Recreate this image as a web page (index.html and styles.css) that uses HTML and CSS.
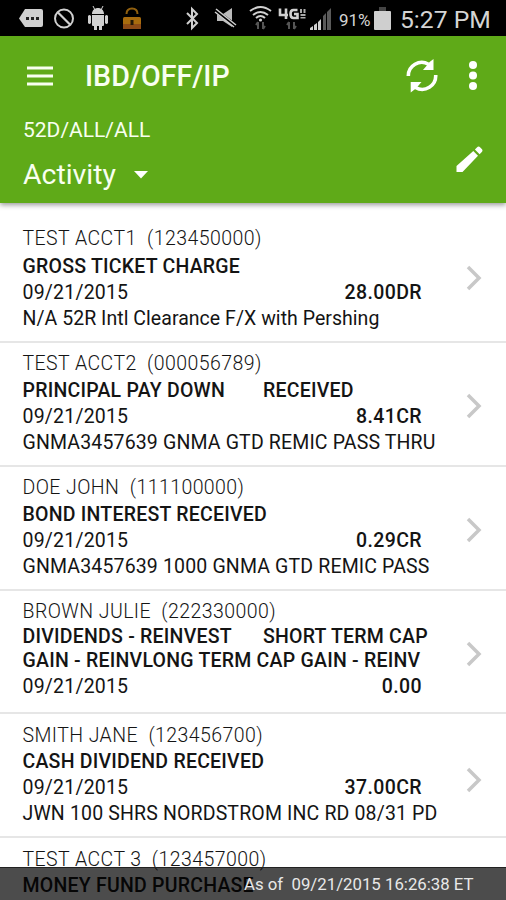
FILE: index.html
```html
<!DOCTYPE html>
<html lang="en">
<head>
<meta charset="utf-8">
<title>Activity</title>
<link rel="stylesheet" href="styles.css">
</head>
<body>
<div class="screen">
  <div class="status">
    <svg class="status-icons" width="130" height="36" viewBox="0 0 130 36" fill="#d0d0d0">
      <path d="M25 9h16q2 0 2 2v14q0 2-2 2H25l-6-8.500z"/>
      <path d="M26 17h3v3h-3zM31 17h3v3h-3zM36 17h3v3h-3z" fill="#222"/>
      <circle cx="64" cy="18.500" r="9" fill="none" stroke="#d0d0d0" stroke-width="2"/>
      <path d="M57.500 12 70.500 25" stroke="#d0d0d0" stroke-width="2.200"/>
      <path d="M92 14c0-8 12-8 12 0zM92 15h12v10q0 1-1 1h-1v4h-3v-4h-2v4h-3v-4h-1q-1 0-1-1zM88 16q1.500-2 3 0v7q-1.500 2-3 0zM105 16q1.500-2 3 0v7q-1.500 2-3 0z"/>
      <path d="M93 6l2 4M103 6l-2 4" stroke="#d0d0d0"/>
    </svg>
    <svg class="lock" width="20" height="24" viewBox="0 0 20 24">
      <path d="M4.500 8q0-5.500 5.500-5.500T15.500 8" fill="none" stroke="#91600f" stroke-width="2"/>
      <rect x="1" y="11" width="18" height="12" rx="1.500" fill="#a86c0e"/><path d="M1 18h18v5H1z" fill="#8d4b16"/>
      <path d="M8.500 14h3v5h-3z" fill="#251a08"/>
    </svg>
    <svg class="signals" width="156" height="36" viewBox="0 0 156 36" fill="#d0d0d0">
      <path d="m4 13 10 10-5 5V9l5 5L4 24" fill="none" stroke="#d0d0d0" stroke-width="2"/>
      <path d="M34 14h6l9-6v19l-9-6h-6z" fill="#bbb"/><path d="m33 11 20 15" stroke="#000" stroke-width="4"/><path d="m33 9 20 16M32 12l19 15" stroke="#d0d0d0" stroke-width="1.500"/>
      <path d="M67 11q10.500-8 21 0M70 15q7.500-6 15 0M73 18q4.500-4 9 0" fill="none" stroke="#d0d0d0" stroke-width="2"/><circle cx="77.500" cy="20" r="1.600"/>
      <path d="M75 22v7m-2-4 2-3M80 22v7m2-3-2 3M106 22v7m-2-4 2-3M111 22v7m2-3-2 3" stroke="#555" stroke-width="2"/>
      <path d="M97 8.500v6.500h8m-2-6.500v10.500M114.500 10h-4q-3 0-3 4t3 4h4v-4h-3.500" fill="none" stroke="#d0d0d0" stroke-width="2.600"/>
      <path d="M117 9h2v4h-2zM120.500 9h2v4h-2zM117.500 14h5v2h-5zM117.500 17h5v1.500h-5z" fill="#aaa"/>
      <path d="M127 30v-2l3-2v4zM131 30v-5l3-2v7zM135 30v-8l3-3v11z"/><path d="M140 30V16l3-3v17zM144 30V12l4-4v22z" fill="#5a5a5a"/>
    </svg>
    <span class="percent">91%</span>
    <svg class="battery" width="17" height="23" viewBox="0 0 17 23"><path d="M5 0h7v4H5z" fill="#444"/><rect y="4" width="17" height="19" rx="1" fill="#cfcfcf"/></svg>
    <span class="clock">5:27 PM</span>
  </div>

  <header class="header">
    <div class="toolbar">
      <svg class="menu" width="27" height="20" viewBox="0 0 27 20"><path d="M1 2h26M1 10h26M1 18h26" stroke="#f7ffef" stroke-width="3"/></svg>
      <h1 class="title">IBD/OFF/IP</h1>
      <svg class="sync" width="32" height="34" viewBox="0 0 32 34">
        <path d="M2.300 17A13.500 13.500 0 0 1 22.500 5.200M29.700 16A13.500 13.500 0 0 1 9.500 28.500" fill="none" stroke="#fff" stroke-width="3.600"/>
        <path d="M27.500 0V11H17l3.600-4.200 3-3.800zM4.700 33.500V23h10.800l-3.600 4.200-3 3z" fill="#fff"/>
      </svg>
      <svg class="more" width="10" height="32" viewBox="0 0 10 32" fill="#fff"><circle cx="5" cy="5" r="4"/><circle cx="5" cy="15.500" r="4"/><circle cx="5" cy="26" r="4"/></svg>
    </div>
    <div class="filter">52D/ALL/ALL</div>
    <div class="view">
      <span class="view-name">Activity</span>
      <svg class="caret" width="14" height="8" viewBox="0 0 14 8"><path d="M0 0h14L7 7.500z" fill="#fff"/></svg>
      <svg class="pencil" width="27" height="27" viewBox="0 0 27 27" fill="#fff"><path d="m17.300 5 4.700 4.700L6.500 26H.5v-6zM18.900 3.500l2-2.100q1.700-1.600 3.400 0l1.500 1.500q1.400 1.500 0 3l-2.200 2.300z"/></svg>
    </div>
  </header>

  <main class="list">
    <article class="row row-first">
      <div class="info"><div class="name">TEST ACCT1  (123450000)</div><div class="kind">GROSS TICKET CHARGE</div><div class="meta"><span>09/21/2015</span><b class="amount">28.00DR</b></div><div class="note mixed">N/A 52R Intl Clearance F/X with Pershing</div></div>
      <svg class="chevron" width="16" height="26" viewBox="0 0 16 26"><path d="m2 2 11 11L2 24"/></svg>
    </article>
    <article class="row">
      <div class="info"><div class="name">TEST ACCT2  (000056789)</div><div class="kind split"><span class="left">PRINCIPAL PAY DOWN</span><span>RECEIVED</span></div><div class="meta"><span>09/21/2015</span><b class="amount">8.41CR</b></div><div class="note">GNMA3457639 GNMA GTD REMIC PASS THRU</div></div>
      <svg class="chevron" width="16" height="26" viewBox="0 0 16 26"><path d="m2 2 11 11L2 24"/></svg>
    </article>
    <article class="row">
      <div class="info"><div class="name">DOE JOHN  (111100000)</div><div class="kind">BOND INTEREST RECEIVED</div><div class="meta"><span>09/21/2015</span><b class="amount">0.29CR</b></div><div class="note">GNMA3457639 1000 GNMA GTD REMIC PASS</div></div>
      <svg class="chevron" width="16" height="26" viewBox="0 0 16 26"><path d="m2 2 11 11L2 24"/></svg>
    </article>
    <article class="row">
      <div class="info"><div class="name">BROWN JULIE  (222330000)</div><div class="kind tight split"><span class="left">DIVIDENDS - REINVEST</span><span>SHORT TERM CAP</span></div><div class="kind tight">GAIN - REINVLONG TERM CAP GAIN - REINV</div><div class="meta"><span>09/21/2015</span><b class="amount">0.00</b></div></div>
      <svg class="chevron" width="16" height="26" viewBox="0 0 16 26"><path d="m2 2 11 11L2 24"/></svg>
    </article>
    <article class="row row-low">
      <div class="info"><div class="name">SMITH JANE  (123456700)</div><div class="kind">CASH DIVIDEND RECEIVED</div><div class="meta"><span>09/21/2015</span><b class="amount">37.00CR</b></div><div class="note">JWN 100 SHRS NORDSTROM INC RD 08/31 PD</div></div>
      <svg class="chevron" width="16" height="26" viewBox="0 0 16 26"><path d="m2 2 11 11L2 24"/></svg>
    </article>
    <article class="row row-low">
      <div class="info"><div class="name">TEST ACCT 3  (123457000)</div><div class="kind">MONEY FUND PURCHASE</div></div>
    </article>
  </main>
  <footer class="asof">As of  09/21/2015 16:26:38 ET</footer>
</div>
</body>
</html>
```
FILE: styles.css
```css
* { box-sizing: border-box; }
body { margin: 0; font-family: Roboto, "Liberation Sans", sans-serif; }
svg { display: block; flex: none; }
.screen { position: relative; width: 506px; height: 900px; overflow: hidden; background: #fff; display: flex; flex-direction: column; }

.status { flex: none; height: 36px; background: #000; color: #d4d4d4; display: flex; }
.lock { margin: 6px 0 0 -8px; }
.signals { margin-left: 41px; }
.percent { width: 36px; line-height: 40px; font-size: 17px; white-space: nowrap; }
.battery { margin: 7px 0 0 -1px; }
.clock { margin-left: 9px; line-height: 39px; font-size: 24.700px; white-space: nowrap; }

.header { position: relative; flex: none; height: 167px; background: #5faa18; color: #f8fff0; box-shadow: 0 2px 5px rgba(0,0,0,.4); }
.toolbar { height: 80px; display: flex; align-items: center; padding: 0 28px 0 26px; }
.title { margin: 0 auto 0 32px; font-size: 28.600px; font-weight: 500; line-height: 36px; }
.more { margin-left: 30px; }
.filter { margin-left: 23px; height: 28px; line-height: 28px; font-size: 21px; }
.view { display: flex; align-items: center; height: 60px; padding: 1px 23px 0 23px; }
.view-name { font-size: 28.400px; }
.caret { margin-left: 18px; }
.pencil { margin: -31px 0 0 auto; }

.list { flex: 1; color: #141414; }
.row { height: 123.800px; display: flex; justify-content: space-between; padding: 8px 24px 0 22.500px; border-bottom: 2px solid #e6e6e6; }
.row-first { height: 140px; padding-top: 22px; }
.row-low { padding-top: 9px; }
.info { width: 399.500px; white-space: pre; font-size: 19.500px; letter-spacing: .2px; }
.name { height: 26px; line-height: 25px; font-weight: 300; letter-spacing: .43px; }
.row-first .name { height: 28px; line-height: 27px; }
.row-low .name { height: 25px; }
.kind { height: 27px; line-height: 27px; font-weight: 500; letter-spacing: .23px; }
.kind.tight { height: 24.500px; line-height: 24.500px; }
.split { display: flex; }
.left { flex: none; width: 240.500px; }
.meta { display: flex; justify-content: space-between; height: 26px; line-height: 26px; }
.amount { font-weight: 500; letter-spacing: .38px; }
.note { height: 26px; line-height: 26px; letter-spacing: .15px; }
.note.mixed { letter-spacing: .04px; }
.chevron { margin-top: 42px; fill: none; stroke: #c8c8c8; stroke-width: 3.500; }
.row-first .chevron { margin-top: 40px; }
.row-low .chevron { margin-top: 44px; }

.asof { position: absolute; left: 0; right: 0; bottom: 0; height: 33px; padding-left: 244px; background: rgba(0,0,0,.7); border-top: 1px solid #222; color: #e8e8e8; font-size: 16.800px; line-height: 33px; white-space: pre; }
```
